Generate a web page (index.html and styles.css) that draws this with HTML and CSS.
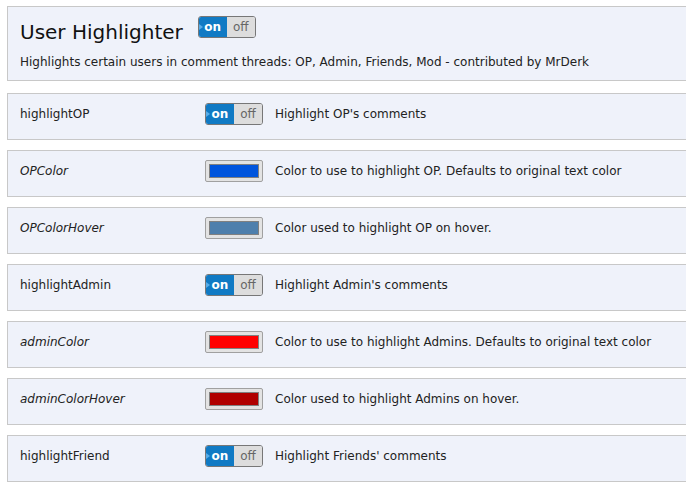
FILE: index.html
```html
<!DOCTYPE html>
<html lang="en">
<head>
    <meta charset="UTF-8">
    <title>User Highlighter</title>
    <link rel="stylesheet" href="styles.css">
</head>
<body>
    <div class="options">
        <div class="module-header">
            <div class="module-title">
                <h1>User Highlighter</h1>
                <div class="toggle"><span class="on">on</span><span class="off">off</span></div>
            </div>
            <p class="module-desc">Highlights certain users in comment threads: OP, Admin, Friends, Mod - contributed by MrDerk</p>
        </div>

        <div class="option-row">
            <div class="option-name">highlightOP</div>
            <div class="option-control"><div class="toggle"><span class="on">on</span><span class="off">off</span></div></div>
            <div class="option-desc">Highlight OP's comments</div>
        </div>
        <div class="option-row">
            <div class="option-name sub">OPColor</div>
            <div class="option-control"><div class="swatch"><span style="background-color: #0055dd;"></span></div></div>
            <div class="option-desc">Color to use to highlight OP. Defaults to original text color</div>
        </div>
        <div class="option-row">
            <div class="option-name sub">OPColorHover</div>
            <div class="option-control"><div class="swatch"><span style="background-color: #4e7fac;"></span></div></div>
            <div class="option-desc">Color used to highlight OP on hover.</div>
        </div>
        <div class="option-row">
            <div class="option-name">highlightAdmin</div>
            <div class="option-control"><div class="toggle"><span class="on">on</span><span class="off">off</span></div></div>
            <div class="option-desc">Highlight Admin's comments</div>
        </div>
        <div class="option-row">
            <div class="option-name sub">adminColor</div>
            <div class="option-control"><div class="swatch"><span style="background-color: #ff0000;"></span></div></div>
            <div class="option-desc">Color to use to highlight Admins. Defaults to original text color</div>
        </div>
        <div class="option-row">
            <div class="option-name sub">adminColorHover</div>
            <div class="option-control"><div class="swatch"><span style="background-color: #b00000;"></span></div></div>
            <div class="option-desc">Color used to highlight Admins on hover.</div>
        </div>
        <div class="option-row">
            <div class="option-name">highlightFriend</div>
            <div class="option-control"><div class="toggle"><span class="on">on</span><span class="off">off</span></div></div>
            <div class="option-desc">Highlight Friends' comments</div>
        </div>
    </div>
</body>
</html>
```

FILE: styles.css
```css
html, body {
    overflow: hidden;
}
body {
    margin: 0;
    padding: 6px 0 0 7px;
    background-color: #ffffff;
    font-family: "DejaVu Sans", Verdana, sans-serif;
    font-size: 12px;
    color: #222222;
}
.options {
    width: 720px;
}
.module-header {
    box-sizing: border-box;
    height: 75px;
    background-color: #eff2fa;
    border: 1px solid #c8c8c8;
    padding: 9px 12px 0 12px;
    margin-bottom: 12px;
}
.module-title {
    display: flex;
    align-items: flex-start;
    gap: 15px;
}
.module-title h1 {
    margin: 0;
    padding-top: 3px;
    font-size: 20px;
    line-height: 26px;
    font-weight: normal;
    color: #111111;
}
.module-desc {
    margin: 10px 0 0 0;
    line-height: 15px;
}
.option-row {
    display: flex;
    align-items: center;
    height: 40px;
    padding-bottom: 5px;
    background-color: #eff2fa;
    border: 1px solid #c8c8c8;
    margin-bottom: 10px;
}
.option-name {
    width: 197px;
    padding-left: 12px;
    box-sizing: border-box;
}
.option-name.sub {
    font-style: italic;
}
.option-control {
    width: 70px;
}
.toggle {
    display: flex;
    width: 56px;
    height: 20px;
    border: 1px solid #777777;
    border-radius: 3px;
    overflow: hidden;
    position: relative;
}
.toggle span {
    flex: 1;
    line-height: 20px;
    text-align: center;
}
.toggle .on {
    background-color: #107ac4;
    color: #ffffff;
    font-weight: bold;
}
.toggle .on::before {
    content: "";
    position: absolute;
    left: 0;
    top: 7px;
    border-top: 3px solid transparent;
    border-bottom: 3px solid transparent;
    border-left: 4px solid #5aaee8;
}
.toggle .off {
    background-color: #dddddd;
    color: #666666;
}
.swatch {
    width: 50px;
    height: 14px;
    padding: 3px;
    background-color: #e3e3e3;
    border: 1px solid #a0a0a0;
    border-radius: 2px;
}
.swatch span {
    display: block;
    height: 12px;
    border: 1px solid #808080;
}
```
